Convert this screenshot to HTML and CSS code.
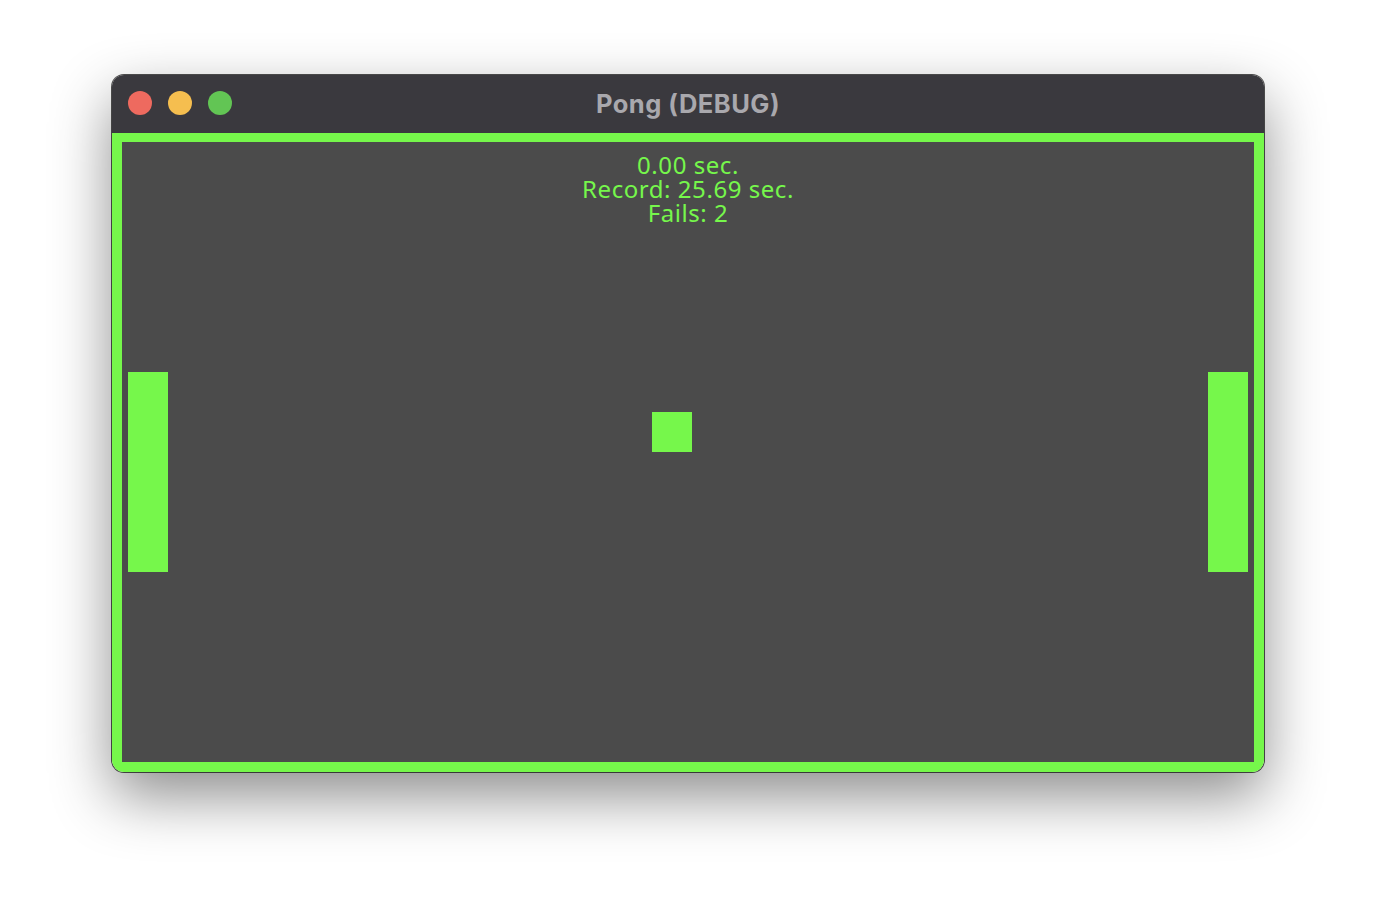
FILE: index.html
```html
<!DOCTYPE html>
<html>
<head>
<meta charset="utf-8">
<link rel="stylesheet" href="styles.css">
</head>
<body>
<div class="window">
  <div class="titlebar">
    <div class="lights">
      <span class="light red"></span>
      <span class="light yellow"></span>
      <span class="light green"></span>
    </div>
    <div class="title">Pong (DEBUG)</div>
  </div>
  <div class="game">
    <div class="field">
      <div class="hud">
        <div>0.00 sec.</div>
        <div>Record: 25.69 sec.</div>
        <div>Fails: 2</div>
      </div>
      <div class="paddle left"></div>
      <div class="paddle right"></div>
      <div class="ball"></div>
    </div>
  </div>
</div>
</body>
</html>
```

FILE: styles.css
```css
html, body {
  margin: 0;
  padding: 0;
  background: #ffffff;
}
body {
  width: 1376px;
  height: 920px;
  overflow: hidden;
}
.window {
  margin: 75px 0 0 112px;
  width: 1152px;
  height: 697px;
  border-radius: 12px;
  overflow: hidden;
  box-shadow: 0 0 0 1px rgba(20, 20, 20, 0.75), 0 24px 60px rgba(0, 0, 0, 0.45);
  display: flex;
  flex-direction: column;
}
.titlebar {
  height: 58px;
  flex: none;
  background: #3a393e;
  position: relative;
  display: flex;
  align-items: center;
  justify-content: center;
}
.lights {
  position: absolute;
  left: 16px;
  top: 16px;
  display: flex;
  gap: 16px;
}
.light {
  width: 24px;
  height: 24px;
  border-radius: 50%;
  display: block;
}
.red { background: #ee6a5f; }
.yellow { background: #f5be4f; }
.green { background: #62c554; }
.title {
  font-family: Inter, "Liberation Sans", sans-serif;
  font-weight: 700;
  font-size: 25.5px;
  letter-spacing: 0.5px;
  color: #a9a8ad;
  margin-top: -2px;
}
.game {
  flex: 1;
  background: #76f74b;
  padding: 9px 10px 10px 10px;
  display: flex;
}
.field {
  flex: 1;
  background: #4b4b4b;
  position: relative;
}
.hud {
  font-family: "Noto Sans", "Open Sans", sans-serif;
  font-size: 24px;
  line-height: 24px;
  letter-spacing: 0.55px;
  color: #76f74b;
  text-align: center;
  padding-top: 11px;
}
.paddle {
  position: absolute;
  width: 40px;
  height: 200px;
  top: 230px;
  background: #76f74b;
}
.paddle.left { left: 6px; }
.paddle.right { right: 6px; }
.ball {
  position: absolute;
  left: 530px;
  top: 270px;
  width: 40px;
  height: 40px;
  background: #76f74b;
}
```
